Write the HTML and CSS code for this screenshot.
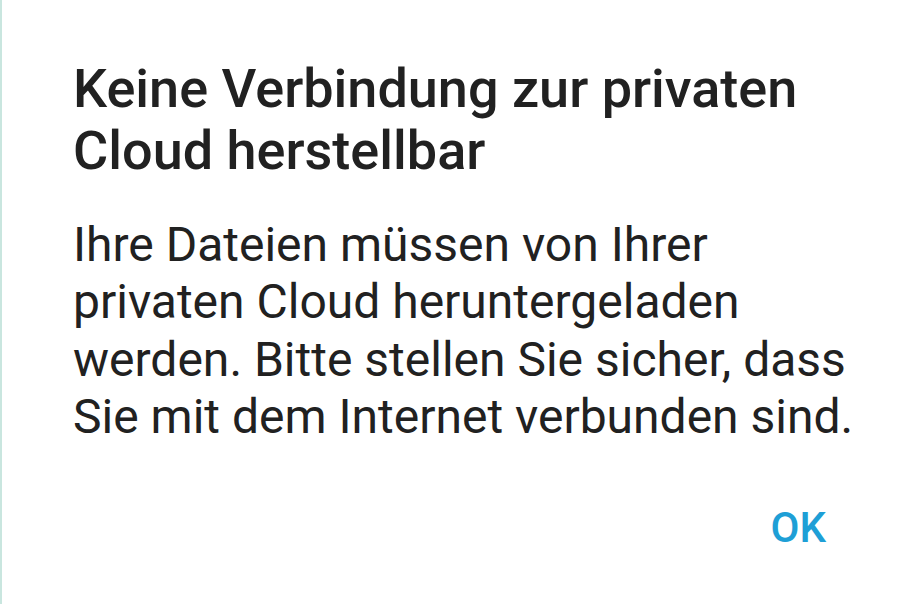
FILE: index.html
```html
<!DOCTYPE html>
<html lang="de">
<head>
<meta charset="utf-8">
<link rel="stylesheet" href="styles.css">
</head>
<body>
<div class="dialog">
  <h1 class="title">Keine Verbindung zur privaten<br>Cloud herstellbar</h1>
  <p class="message">Ihre Dateien müssen von Ihrer<br>privaten Cloud heruntergeladen<br>werden. Bitte stellen Sie sicher, dass<br>Sie mit dem Internet verbunden sind.</p>
  <div class="actions">
    <button class="ok">OK</button>
  </div>
</div>
</body>
</html>
```
FILE: styles.css
```css
html, body {
  margin: 0;
  padding: 0;
  background: #ffffff;
  height: 100%;
}
body {
  font-family: Roboto, "Noto Sans", sans-serif;
  border-left: 2px solid #c9e6df;
  box-sizing: border-box;
}
.dialog {
  padding: 58px 20px 0 71px;
  display: flex;
  flex-direction: column;
}
.title {
  margin: 0;
  font-size: 54px;
  line-height: 62px;
  font-weight: 500;
  color: #212121;
  white-space: nowrap;
}
.message {
  margin: 34px 0 0 0;
  font-size: 48px;
  line-height: 57.3px;
  font-weight: 400;
  color: #212121;
  white-space: nowrap;
}
.actions {
  display: flex;
  justify-content: flex-end;
  padding-right: 67px;
  margin-top: 58px;
}
.ok {
  border: none;
  background: none;
  padding: 0;
  font-family: Roboto, sans-serif;
  font-size: 42px;
  font-weight: 500;
  color: #1e9fd6;
  line-height: 50px;
}
```
